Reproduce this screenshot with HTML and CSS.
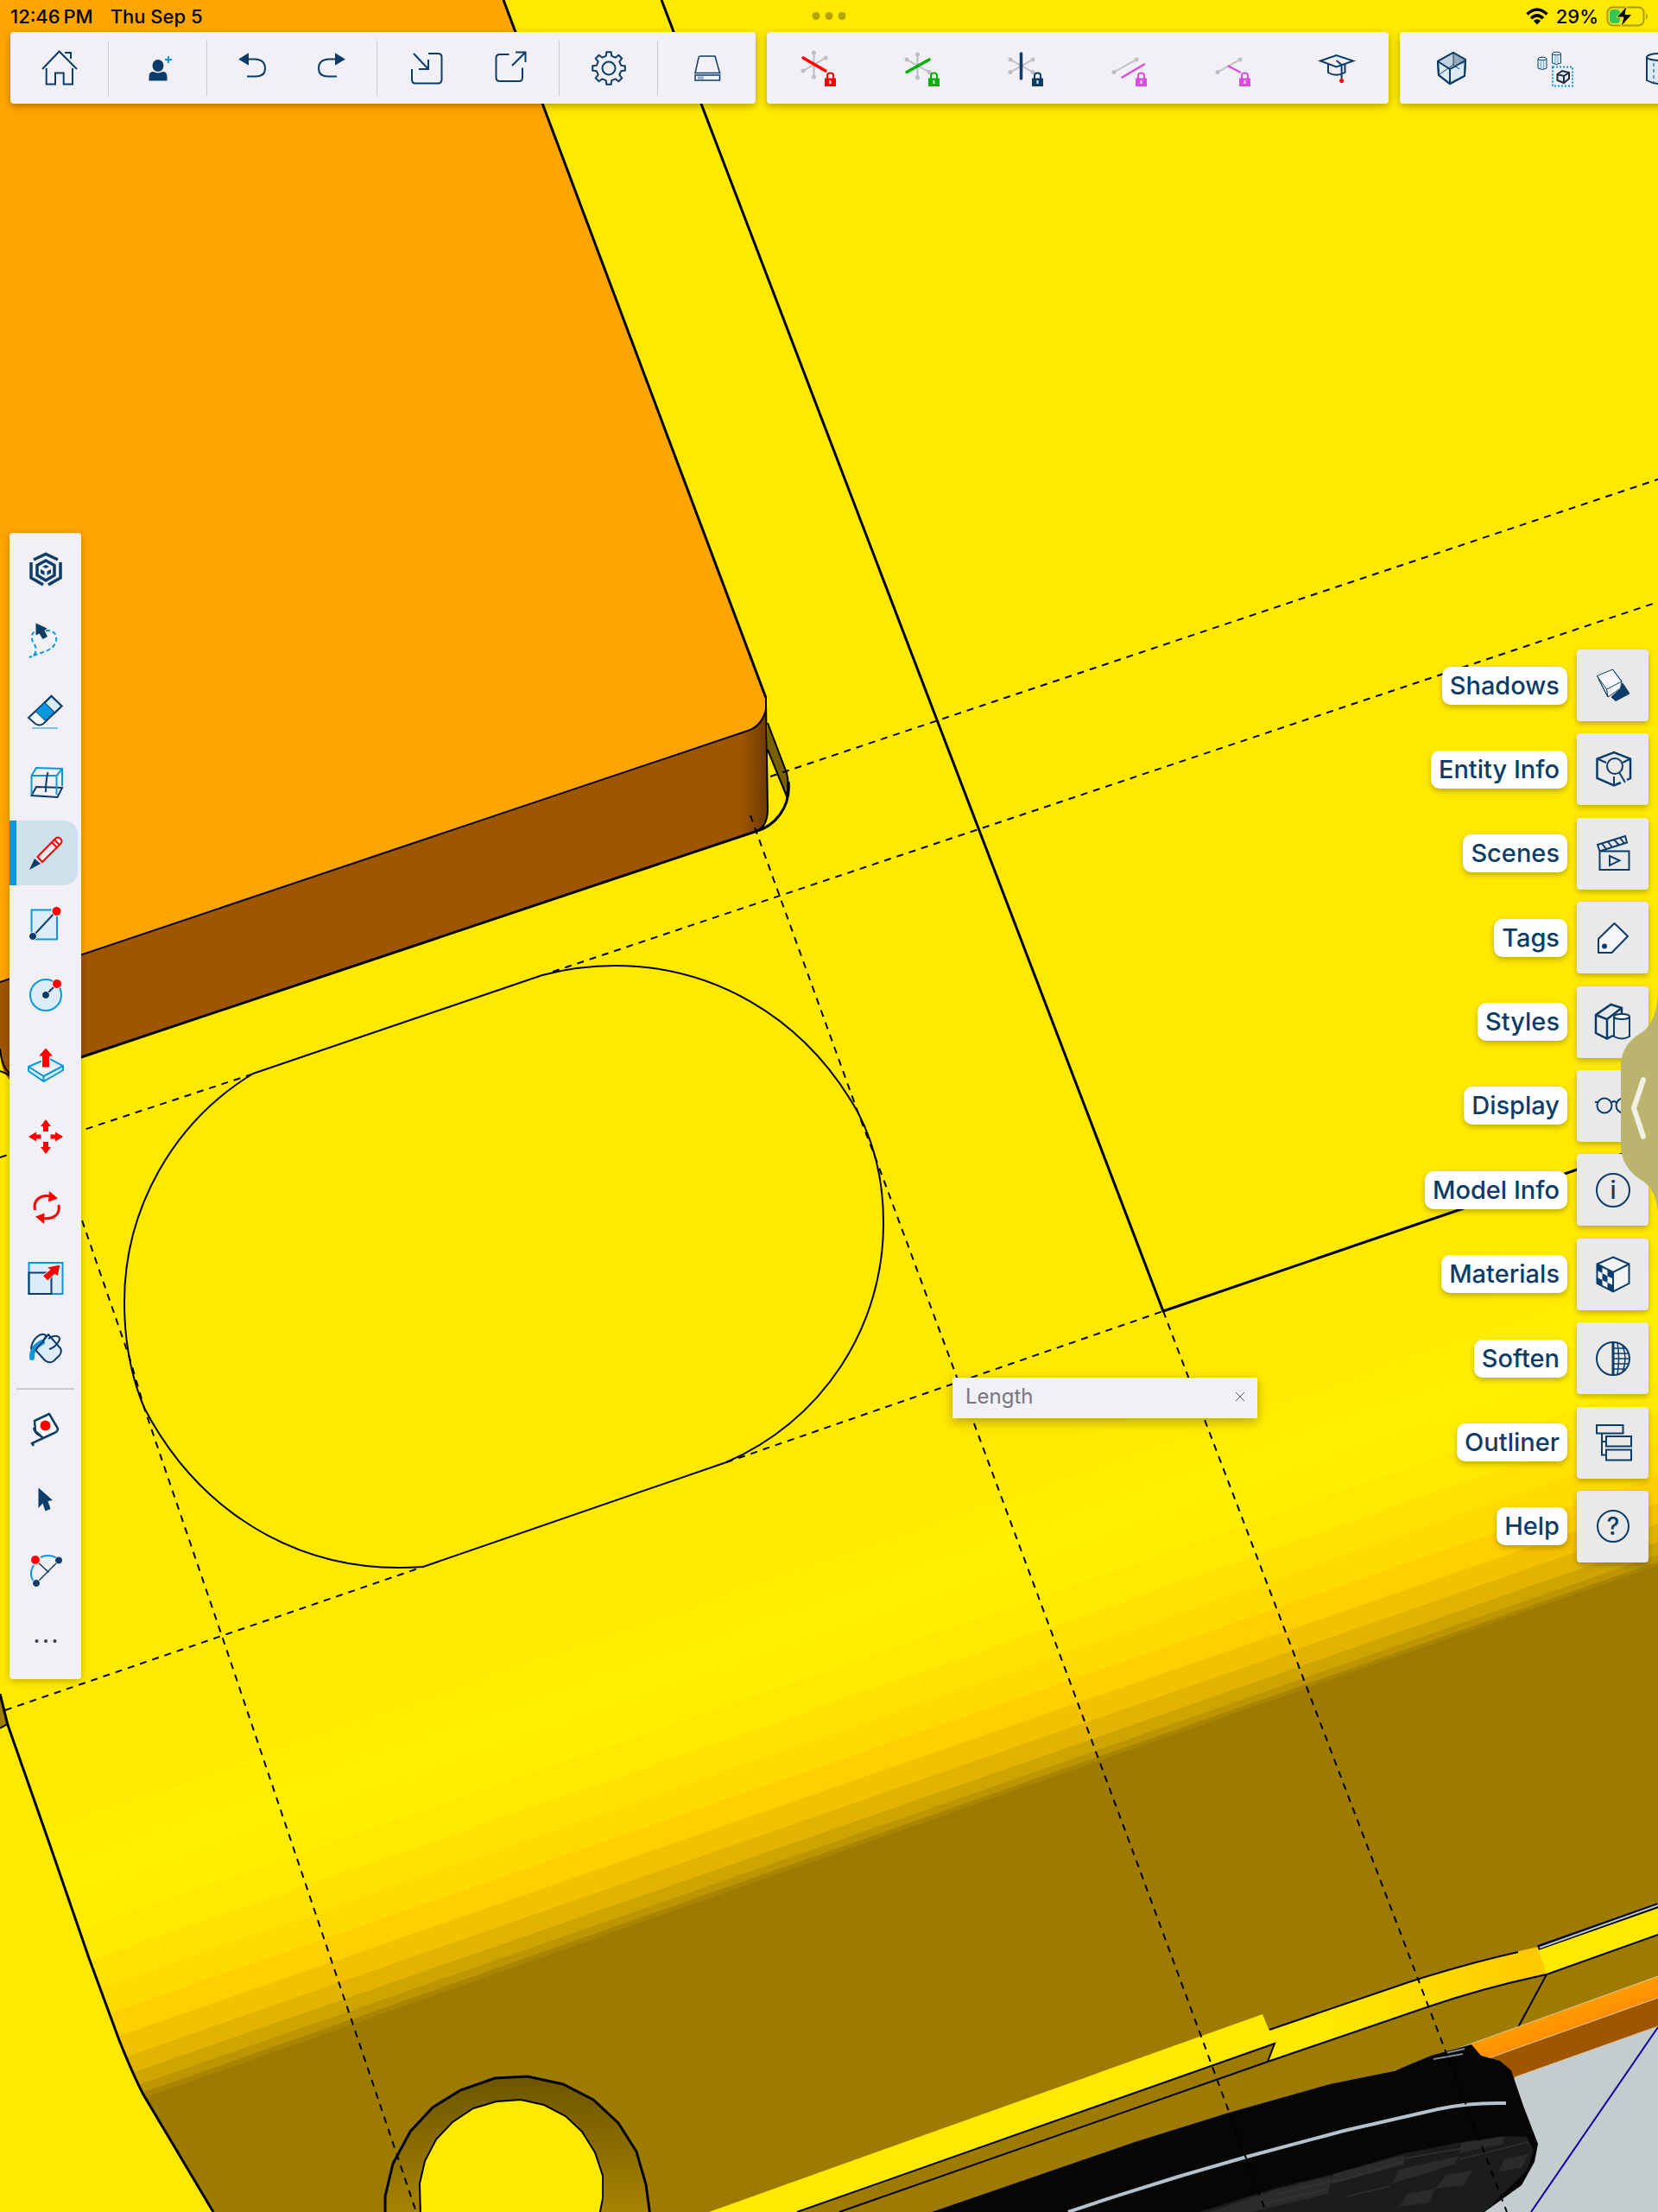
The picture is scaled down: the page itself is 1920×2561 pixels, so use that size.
FILE: index.html
```html
<!DOCTYPE html>
<html lang="en">
<head>
    <meta charset="UTF-8">
    <meta name="viewport" content="width=device-width, initial-scale=1.0">
    <title>3D Modeler</title>
    <link rel="stylesheet" href="styles.css">
</head>
<body>
<div class="app">

    <!-- Model viewport -->
    <svg class="scene" viewBox="0 0 1920 2561" preserveAspectRatio="xMidYMid slice" aria-hidden="true">
        <defs>
            <clipPath id="body-clip">
                <path d="M0 1961L9 1997L55 2128L103 2267L138 2362L166 2425L247 2561H1920V1400H0Z"/>
            </clipPath>
            <linearGradient id="side-shade" gradientUnits="userSpaceOnUse" x1="858" y1="0" x2="889" y2="0">
                <stop offset="0" stop-color="#9f5600"/>
                <stop offset="1" stop-color="#6d3a00"/>
            </linearGradient>
            <linearGradient id="lamp-shade" x1="0" y1="0" x2="0" y2="1">
                <stop offset="0" stop-color="#6d5500"/>
                <stop offset="1" stop-color="#a88400"/>
            </linearGradient>
            <linearGradient id="sill-shade" gradientUnits="userSpaceOnUse" x1="1540" y1="0" x2="1785" y2="0">
                <stop offset="0" stop-color="#ffe900"/>
                <stop offset="1" stop-color="#ffc800"/>
            </linearGradient>
            <linearGradient id="bumper-shade" gradientUnits="userSpaceOnUse" x1="1800" y1="2330" x2="1811" y2="2360">
                <stop offset="0" stop-color="#ff9d00"/>
                <stop offset="1" stop-color="#ff8a00"/>
            </linearGradient>
        </defs>

        <rect width="1920" height="2561" fill="#ffe900"/>

        <!-- rounded body side, one facet per band -->
        <g clip-path="url(#body-clip)">
            <path fill="#ffeb00" d="M0 2098L1200 1682L1920 1430V2561H0Z"/>
            <path fill="#ffee00" d="M0 2138L1200 1726L1920 1474V2561H0Z"/>
            <path fill="#fff000" d="M0 2181L1200 1766L1920 1514V2561H0Z"/>
            <path fill="#ffee00" d="M0 2222L1200 1807L1920 1556V2561H0Z"/>
            <path fill="#ffe900" d="M0 2266L1200 1851L1920 1598V2561H0Z"/>
            <path fill="#ffe200" d="M0 2306L1200 1890L1920 1637V2561H0Z"/>
            <path fill="#ffdb00" d="M0 2342L1200 1926L1920 1673V2561H0Z"/>
            <path fill="#ffcf00" d="M0 2375L1200 1959L1920 1709V2561H0Z"/>
            <path fill="#f4c100" d="M0 2405L1200 1988L1920 1740V2561H0Z"/>
            <path fill="#e2b400" d="M0 2432L1200 2014L1920 1764V2561H0Z"/>
            <path fill="#cda400" d="M0 2453L1200 2036L1920 1785V2561H0Z"/>
            <path fill="#bc9500" d="M0 2470L1200 2051L1920 1800V2561H0Z"/>
            <path fill="#a88400" d="M0 2481L1200 2059L1920 1808V2561H0Z"/>
            <path fill="#9d7b00" d="M0 2488L1200 2064L1920 1812V2561H0Z"/>
        </g>
        <path fill="#a07d00" d="M0 1965L9 1996L0 2001Z"/>
        <path class="edge" d="M0 2001L9 1996"/>
        <path class="edge bold" d="M0 1961L9 1997L55 2128L103 2267L138 2362Q154 2402 166 2425L247 2561"/>

        <!-- head lamp -->
        <path class="edge bold" fill="url(#lamp-shade)" d="M446 2566V2543L455 2505L475 2468L501 2440L533 2420L573 2406L611 2404L652 2413L687 2431L716 2458L737 2491L748 2529L753 2566"/>
        <path class="edge" fill="#ffe900" d="M487 2566L486 2528L492 2502L505 2477L524 2457L548 2441L575 2433L603 2431L630 2437L655 2450L674 2468L689 2492L698 2519V2545L694 2566"/>

        <!-- hood panel -->
        <path fill="#ffa500" d="M0 0H583L887 808V822Q882 842 863 847L0 1137Z"/>
        <path fill="#9f5600" d="M0 1137L863 847Q882 842 887 818L889 937Q889 958 874 963L12 1251Q0 1240 0 1214Z"/>
        <path fill="url(#side-shade)" d="M858 849Q882 842 887 818L889 937Q889 958 874 963L858 968Z"/>
        <path fill="#776000" d="M889 837L911 895L913 910L911 922L889 868Z"/>
        <path class="edge bold" d="M583 0L887 808"/>
        <path class="edge" d="M887 808V822Q882 842 863 847L0 1137"/>
        <path class="edge" d="M887 815L889 937Q889 958 874 963M889 837L911 895Q914 906 911 922L889 868"/>
        <path class="edge bold" d="M913 905C916 935 897 957 874 963L94 1224L12 1251"/>
        <path class="edge" d="M0 1214Q2 1236 12 1243M0 1240L12 1245"/>
        <path class="edge bold" d="M766 0L1347 1518L1920 1322"/>

        <!-- slot outline -->
        <path class="edge" d="M293 1243L628 1129Q670 1118 712 1118C820 1118 928 1172 993 1287C1013 1325 1023 1366 1023 1415A300 300 0 0 1 841 1693L490 1814Q476 1815 462 1815C340 1815 230 1750 167 1630Q144 1575 144 1508A310 310 0 0 1 293 1243Z"/>

        <!-- sill and bumper -->
        <path fill="#ffe900" d="M821 2561L1462 2332L1476 2366L923 2561Z"/>
        <path fill="url(#sill-shade)" d="M1465 2352L1470 2350L1634 2294Q1710 2269 1781 2254L1791 2286Q1720 2303 1655 2323L1468 2387L1476 2366Z"/>
        <path fill="#ffe900" d="M1781 2257L1920 2208V2240L1791 2286Z"/>
        <path class="edge" d="M1470 2350L1634 2294Q1700 2273 1758 2260M972 2561L1468 2387L1655 2323Q1720 2301 1791 2286L1920 2240M923 2561L1476 2366L1468 2387M1791 2286L1758 2347"/>
        <path d="M1781 2255L1920 2206" fill="none" stroke="#000" stroke-width="6"/>
        <path d="M1783 2255L1920 2206" fill="none" stroke="#b9c8d0" stroke-width="2"/>
        <path fill="#c5ccce" d="M1754 2405L1920 2346V2561H1715Z"/>
        <path fill="#9f5600" d="M1715 2384L1920 2311V2346L1754 2405Z"/>
        <path fill="url(#bumper-shade)" d="M1700 2368L1920 2288V2313L1721 2384Z"/>
        <path d="M1614 2398L1704 2366L1920 2288M1721 2384L1920 2313M1754 2405L1920 2346" fill="none" stroke="#dcc9a8" stroke-width="1"/>
        <path d="M1920 2347L1773 2561" stroke="#0b00a8" stroke-width="2"/>

        <!-- tyre -->
        <path fill="#060606" d="M1079 2561L1198 2520L1314 2480L1423 2446L1540 2413L1614 2398L1657 2380L1704 2367L1715 2380L1737 2386L1750 2397L1764 2438L1781 2482L1777 2503L1762 2530L1719 2561Z"/>
        <path fill="#1c1c1c" d="M1388 2561L1478 2533L1544 2517L1626 2493L1692 2480L1742 2473L1768 2474L1776 2490L1768 2513L1719 2561Z"/>
        <path fill="#2b2b2b" d="M1544 2517L1626 2495V2506L1540 2529ZM1692 2481L1742 2474L1740 2482L1690 2493ZM1478 2535L1542 2519L1538 2540L1450 2561H1400ZM1620 2512L1690 2496L1684 2506L1612 2528ZM1675 2518L1705 2513L1695 2530L1662 2534ZM1742 2500L1770 2494L1762 2510L1736 2514ZM1630 2540L1662 2534L1655 2550L1620 2555Z"/>
        <path fill="none" stroke="#3a3a3a" stroke-width="1" d="M1480 2540L1546 2524M1548 2526L1624 2503M1626 2499L1694 2487M1690 2500L1770 2480M1560 2543L1610 2531M1460 2552L1536 2535"/>
        <path fill="none" stroke="#7f8a90" stroke-width="2" d="M1660 2384L1694 2378M1674 2377L1696 2372"/>
        <path fill="none" stroke="#b3c2cc" stroke-width="4" d="M1237 2561Q1340 2526 1444 2497L1556 2467L1665 2442Q1700 2434 1744 2435"/>

        <!-- guides -->
        <g class="guide">
            <path d="M892 899L1920 555"/>
            <path d="M640 1125L1920 697"/>
            <path d="M0 1340L291 1244"/>
            <path d="M6 1980L490 1814"/>
            <path d="M841 1693L1347 1518"/>
            <path d="M95 1413L150 1572L167 1630L259 1900L482 2561"/>
            <path d="M869 944L995 1292L1014 1341L1073 1500L1318 2160L1466 2561"/>
            <path d="M1347 1518L1592 2160L1745 2561"/>
        </g>
    </svg>

    <header class="top">
        <div class="status">
            <span class="status-time">12:46&thinsp;PM</span>
            <span>Thu Sep 5</span>
            <span class="status-dots"><i></i><i></i><i></i></span>
            <span class="status-right">
                <svg class="wifi" viewBox="0 0 26 20">
                    <g fill="none" stroke="#000" stroke-width="3.4">
                        <path d="M1.5 7.5Q13-3.5 24.500 7.500"/>
                        <path d="M6 12.200Q13 5.500 20 12.200"/>
                    </g>
                    <path d="M8.800 15Q13 11.500 17.200 15L13 19.500Z"/>
                </svg>
                29%
                <svg class="battery" viewBox="0 0 50 24">
                    <rect x="1.500" y="1.500" width="42" height="21" rx="6" fill="none" stroke="#a89a00" stroke-width="2"/>
                    <path d="M46 8.500Q50 12 46 15.500Z" fill="#a89a00"/>
                    <rect x="4" y="4" width="12" height="16" rx="4" fill="#34c759"/>
                    <path d="M24 0L12 13H20L17 24L30 9.500H22Z" stroke="#ffe900" stroke-width="1"/>
                </svg>
            </span>
        </div>

        <nav class="toolbars" aria-label="Main toolbars">
            <div class="toolbar">
                <div class="group">
                    <button class="tool" aria-label="Home"><svg class="icon" viewBox="0 0 48 48"><path d="M4 25L23.600 4.500L44 25M30 6H37V13M8.700 24V42.500H19V29.500H28.700V42.500H39V24"/></svg></button>
                </div>
                <div class="group">
                    <button class="tool" aria-label="Invite"><svg class="icon" viewBox="0 0 48 48"><ellipse class="navy" cx="24" cy="21" rx="5.500" ry="6"/><path class="navy" d="M14.500 37.500V34Q14.500 29 18 29Q24 32 30 29Q33.500 29 33.500 34V37.500Z"/><path class="sky-line" d="M36 10V18M32 14H40"/></svg></button>
                </div>
                <div class="group history">
                    <button class="tool" aria-label="Undo"><svg class="icon" viewBox="0 0 48 48"><path d="M18 13.500H26Q38 14 38 24Q38 33.500 27 33.500H17"/><path class="navy" d="M9 13.500L18 8V19Z"/></svg></button>
                    <button class="tool" aria-label="Redo"><svg class="icon" viewBox="0 0 48 48"><path d="M30 13.500H22Q10 14 10 24Q10 33.500 21 33.500H31"/><path class="navy" d="M39 13.500L30 8V19Z"/></svg></button>
                </div>
                <div class="group">
                    <button class="tool" aria-label="Import"><svg class="icon" viewBox="0 0 48 48"><path d="M26 7H37Q41.500 7 41.500 11V37Q41.500 41.500 37 41.500H11Q7 41.500 7 37V25M9 7L26 25M26 14V25H15"/></svg></button>
                    <button class="tool" aria-label="Export"><svg class="icon" viewBox="0 0 48 48"><path d="M22.500 8H12Q7.500 8 7.500 12V35Q7.500 39 12 39H34Q38 39 38 35V23.500M26 21L41.500 5.500M30 5.500H41.500V17"/></svg></button>
                </div>
                <div class="group">
                    <button class="tool" aria-label="Settings"><svg class="icon" viewBox="0 0 48 48"><path d="M21.400 5.200H26.600L27.300 9.900L31.700 11.700L35.400 8.800L39.200 12.600L36.300 16.300L38.100 20.700L42.800 21.400V26.600L38.100 27.300L36.300 31.700L39.200 35.400L35.400 39.200L31.700 36.300L27.300 38.100L26.600 42.800H21.400L20.700 38.100L16.300 36.300L12.600 39.200L8.800 35.400L11.700 31.700L9.900 27.300L5.200 26.600V21.400L9.900 20.700L11.700 16.300L8.800 12.600L12.600 8.800L16.300 11.700L20.700 9.900Z"/><circle cx="24" cy="24" r="7.500"/></svg></button>
                </div>
                <div class="group">
                    <button class="tool" aria-label="Drive"><svg class="icon" viewBox="0 0 48 48"><g stroke-width="1.500"><path d="M16 10H33L38.500 29.500H10L14 12Q14.500 10 16 10ZM10 32H38.500V38H10Z"/></g><path d="M13 35H20" stroke="#8fa5ba" stroke-width="3"/></svg></button>
                </div>
            </div>

            <div class="toolbar locks">
                <button class="tool" aria-label="Lock red axis"><svg class="icon" viewBox="0 0 48 48"><g class="axis"><path d="M18.500 6V34M32 12L6 27"/><circle cx="18.500" cy="6" r="1.500"/><circle cx="18.500" cy="34" r="1.500"/><circle cx="32" cy="12" r="1.500"/><circle cx="6" cy="27" r="1.500"/></g><g class="lock red"><path d="M6 12L32 27" stroke-width="3.500"/><path class="shackle" d="M34 36V32Q34 29.500 37.500 29.500Q41 29.500 41 32V36"/><path class="case" d="M31 35.500H44V45H31ZM36.500 38V42H38.500V38Z"/></g></svg></button>
                <button class="tool" aria-label="Lock green axis"><svg class="icon" viewBox="0 0 48 48"><g class="axis"><path d="M18.500 8V35M6 14L32 28.500"/><circle cx="18.500" cy="8" r="1.500"/><circle cx="18.500" cy="35" r="1.500"/><circle cx="6" cy="14" r="1.500"/><circle cx="32" cy="28.500" r="1.500"/></g><g class="lock green"><path d="M32 14L6 28.500" stroke-width="3.500"/><path class="shackle" d="M34 36V32Q34 29.500 37.500 29.500Q41 29.500 41 32V36"/><path class="case" d="M31 35.500H44V45H31ZM36.500 38V42H38.500V38Z"/></g></svg></button>
                <button class="tool" aria-label="Lock blue axis"><svg class="icon" viewBox="0 0 48 48"><g class="axis"><path d="M6 14L32 28.500M32 14L6 28.500"/><circle cx="6" cy="14" r="1.500"/><circle cx="32" cy="28.500" r="1.500"/><circle cx="32" cy="14" r="1.500"/><circle cx="6" cy="28.500" r="1.500"/></g><g class="lock blue"><path d="M18.500 7V36" stroke-width="3.500"/><path class="shackle" d="M34 36V32Q34 29.500 37.500 29.500Q41 29.500 41 32V36"/><path class="case" d="M31 35.500H44V45H31ZM36.500 38V42H38.500V38Z"/></g></svg></button>
                <button class="tool" aria-label="Lock parallel"><svg class="icon" viewBox="0 0 48 48"><g class="axis"><path d="M6 28.500L32 14"/><circle cx="6" cy="28.500" r="1.500"/><circle cx="32" cy="14" r="1.500"/></g><g class="lock magenta"><path d="M15.500 34.500L41 19.500" stroke-width="2.500"/><path class="shackle" d="M34 36V32Q34 29.500 37.500 29.500Q41 29.500 41 32V36"/><path class="case" d="M31 35.500H44V45H31ZM36.500 38V42H38.500V38Z"/></g></svg></button>
                <button class="tool" aria-label="Lock perpendicular"><svg class="icon" viewBox="0 0 48 48"><g class="axis"><path d="M6 28.500L32 14"/><circle cx="6" cy="28.500" r="1.500"/><circle cx="32" cy="14" r="1.500"/></g><g class="lock magenta"><path d="M18.500 21.500L32 28.500" stroke-width="2.500"/><path class="shackle" d="M34 36V32Q34 29.500 37.500 29.500Q41 29.500 41 32V36"/><path class="case" d="M31 35.500H44V45H31ZM36.500 38V42H38.500V38Z"/></g></svg></button>
                <button class="tool" aria-label="Learn"><svg class="icon" viewBox="0 0 48 48"><path d="M5 15.500L23.600 9L43 15.500L23.600 22.500ZM14 19.500V29Q23.600 34.500 33.500 29V19.500M23.600 15L29.600 20V36"/><circle class="red-fill" cx="29.600" cy="38.500" r="2.500"/></svg></button>
            </div>

            <div class="toolbar views">
                <button class="tool" aria-label="Shaded view"><svg class="icon" viewBox="0 0 48 48"><path d="M26 6L40 14L39 33L22 42L9 32L8 16Z" fill="#dceaf4"/><path d="M26 6L8 16L22 24L26 20Z" fill="#c3d4e0" stroke="none"/><path d="M26 6L40 14L38 19L26 20Z" fill="#93a9b8" stroke="none"/><path d="M26 6L40 14L39 33L22 42L9 32L8 16ZM8 16L22 25L40 15M22 25V42"/><path d="M26 6V20L10 31M26 20L33 25" stroke-width="1"/></svg></button>
                <button class="tool" aria-label="Components"><svg class="icon thin" viewBox="0 0 48 48"><path fill="#dceaf4" d="M4 13V24Q9 27 14 24V13M20.500 7V18Q25.500 21 30.500 18V7"/><ellipse fill="#dceaf4" cx="9" cy="13" rx="5" ry="1.800"/><ellipse fill="#dceaf4" cx="25.500" cy="7" rx="5" ry="1.800"/><path d="M7.500 16V24M10.500 16V24M24 10V18M27 10V18" stroke="#7aa9cc"/><rect x="21" y="22.500" width="23" height="22" stroke="#0a98dc" stroke-width="2" stroke-dasharray="2 2"/><path fill="#dceaf4" stroke="#222a3a" stroke-width="2" d="M26.500 31L32 27L40 29V36L34 41L26.500 38ZM26.500 31L34 33L40 29M34 33V41"/></svg></button>
                <button class="tool" aria-label="Solids"><svg class="icon" viewBox="0 0 48 48"><path fill="#dceaf4" d="M10 11V38Q24 46 38 38V11"/><ellipse fill="#f0f6fa" cx="24" cy="11" rx="14" ry="4"/><path d="M18 18V40" stroke-width="1" stroke-dasharray="4 3"/></svg></button>
            </div>
        </nav>
    </header>

    <main class="sides">
        <div class="palette" role="toolbar" aria-label="Drawing tools">
            <button class="tool" aria-label="Modeler"><svg class="icon" viewBox="0 0 48 48"><g stroke-width="3.500"><path d="M10 12L24 5.500L38 12M41 15V33L27 41M7 15V33L21 41"/><path d="M24 13L34 18.500V30L24 36L14 30V18.500Z"/></g><path class="navy" d="M24 18L28 20L24 22L20 20ZM18 23L22.500 25.500V30L18 27.500ZM30 23L25.500 25.500V30L30 27.500Z" stroke="none"/></svg></button>
            <button class="tool" aria-label="Lasso"><svg class="icon" viewBox="0 0 48 48"><path class="sky-line" stroke-dasharray="5 3" d="M24 12C38 11 39 24 32 31C26 37 15 38 5 43C13 41 14 34 11 28C6 22 7 14 13 12"/><path class="navy" stroke="none" d="M12.500 3.500L25.500 9.500L22.500 12L26 19L20.500 22L16.500 15.500L12.500 17.500Z"/></svg></button>
            <button class="tool" aria-label="Eraser"><svg class="icon" viewBox="0 0 48 48"><path fill="#f4faff" d="M4 31L30.500 6L42.500 17.500L21 38Q17 41 12 38Z"/><path fill="#d8ebf8" d="M22.500 14L30.500 6L42.500 17.500L34 25.500Z"/><path fill="#0a98dc" stroke-width="1" d="M12 23.500L22.500 13.500L34 24.500L23.500 34.500Z"/><path class="sky-line" stroke-width="1" d="M8 43H38"/></svg></button>
            <button class="tool" aria-label="Section"><svg class="icon" viewBox="0 0 48 48"><path d="M13 29L43 30L37.500 41L7.500 39Z"/><path class="sky-line" d="M7.500 38V16L13 7L43 8V28M43 8L36.500 16V38M36.500 16H7.500"/><path d="M26.500 12Q24 22 24 35"/></svg></button>
            <button class="tool selected" aria-label="Line" aria-pressed="true"><svg class="icon" viewBox="0 0 48 48"><path class="red-line" fill="#e6eef5" d="M14.500 28L35 7Q38 4 41 7Q44 10 41 13L20 34ZM31 11L36.500 17M34 8L39.500 14"/><path class="navy" stroke="none" d="M5 43L11 30L18 36Z"/></svg></button>
            <button class="tool" aria-label="Rectangle"><svg class="icon" viewBox="0 0 48 48"><rect class="sky-shape" x="7.500" y="7.500" width="29.500" height="34"/><path d="M9 38L36 9"/><circle class="navy halo" cx="9" cy="38" r="4.500"/><circle class="red-fill halo" cx="36.500" cy="9" r="5.500"/></svg></button>
            <button class="tool" aria-label="Circle"><svg class="icon" viewBox="0 0 48 48"><circle class="sky-shape" cx="24" cy="24" r="18"/><path d="M24 24L37 11"/><circle class="navy halo" cx="24" cy="24" r="4.500"/><circle class="red-fill halo" cx="37" cy="11" r="5.500"/></svg></button>
            <button class="tool" aria-label="Push/Pull"><svg class="icon" viewBox="0 0 48 48"><path class="sky-shape" d="M4 25L27 15L44 24V29L21.500 42L4 30ZM4 25L21.500 36L44 24M21.500 36V42"/><path class="red-fill halo" d="M24 3L33 13H28.500V26H19.500V13H15Z"/></svg></button>
            <button class="tool" aria-label="Move"><svg class="icon" viewBox="0 0 48 48"><path class="red-fill" d="M24 4L30 12H27V18H21V12H18ZM24 44L30 36H27V30H21V36H18ZM4 24L13 18.500V21.500H18.500V26.500H13V29.500ZM44 24L35 18.500V21.500H29.500V26.500H35V29.500Z"/></svg></button>
            <button class="tool" aria-label="Rotate"><svg class="icon" viewBox="0 0 48 48"><path class="red-line" stroke-width="3" d="M11.500 27C9 15 18 9 29 11M39 21C41 33 32 38 21 36.500"/><path class="red-fill" d="M28 5L38 13.500L27 17.500ZM22.500 30.500L12 34.500L22 43Z"/></svg></button>
            <button class="tool" aria-label="Scale"><svg class="icon" viewBox="0 0 48 48"><rect class="sky-shape" x="4.500" y="6" width="39" height="36"/><rect x="4.500" y="17.500" width="26" height="24.500"/><path class="red-fill halo" d="M41 8L38 22L34.500 19L26 27L20.500 21L29 14L25 11Z"/></svg></button>
            <button class="tool" aria-label="Paint"><svg class="icon" viewBox="0 0 48 48"><path fill="#dcecf8" d="M13 23L27 7L41 23Q43 27 40 31L33 38Q28 41 23 37L13 26Z"/><path stroke="#0a98dc" stroke-width="6" stroke-linecap="round" d="M8 34C8 24 12 20 20 16"/><path d="M7 24C8 12 18 4 24 8C24 15 15 19 12 26M27 12C34 7 43 8 39 15Q35 22 28 24"/></svg></button>
            <hr class="divider">
            <button class="tool" aria-label="Tape measure"><svg class="icon" viewBox="0 0 48 48"><path fill="#fff" d="M11 15L28 7L38 24Q38 27 35 28.500L21 35L12 27Z" stroke-width="2.500" stroke-linejoin="round"/><circle class="red-fill" cx="23.500" cy="20.500" r="6"/><path d="M10 23Q12 31 18 32M21 35L8 41L10 44" stroke-width="2.500"/></svg></button>
            <button class="tool" aria-label="Select"><svg class="icon" viewBox="0 0 48 48"><path class="navy" stroke="none" d="M15.500 10.500L32 25L26.500 26L29.500 35L23.500 37.500L20.500 28.500L15.500 34Z"/></svg></button>
            <button class="tool" aria-label="Arc"><svg class="icon" viewBox="0 0 48 48"><path class="sky-line" d="M18 9Q27 5 36 9.500M10 18Q4 28 9.500 36"/><path stroke-width="1.500" d="M14 14L27.500 26.500M39 13L13 39"/><circle class="red-fill halo" cx="12" cy="12" r="5.500"/><circle class="navy halo" cx="39" cy="12.500" r="4.500"/><circle class="navy halo" cx="13" cy="39" r="4.500"/></svg></button>
            <button class="tool" aria-label="More tools"><svg class="icon" viewBox="0 0 48 48"><g fill="#3a3a4a" stroke="none"><circle cx="13.500" cy="24" r="2"/><circle cx="24" cy="24" r="2"/><circle cx="34.500" cy="24" r="2"/></g></svg></button>
        </div>

        <div class="panels">
            <button class="panel"><span class="label">Shadows</span><span class="tile"><svg class="icon thin" viewBox="0 0 48 48"><path class="navy" d="M22 37L27 41.500L43 33L35 21L32 28Z"/><path fill="#f4f6f9" d="M5.500 12.500L23.500 5L34 19L32.500 27L18 37Z"/><path d="M5.500 12.500L16.500 28L34 19M16.500 28L18 37M23.500 5L34 19M7.500 17L18 37"/></svg></span></button>
            <button class="panel"><span class="label">Entity Info</span><span class="tile"><svg class="icon" viewBox="0 0 48 48"><path stroke-width="2.500" d="M33 39L25 42.500L5.500 34V11.500L25 4L44 11.500V34L40 36"/><circle cx="26" cy="20" r="9"/><path d="M31.500 28L38 39M25 32V42M7 12L16 16M43 12L35 16"/></svg></span></button>
            <button class="panel"><span class="label">Scenes</span><span class="tile"><svg class="icon" viewBox="0 0 48 48"><path d="M8.500 21.500H42.500V43H8.500ZM6 14L38 4L40 11.500L8.500 21.500ZM20 27V38L31.500 32.300ZM11 12.500L16 19M18 10.500L23 17M25 8L31 14.500M32 6L37 12.500"/></svg></span></button>
            <button class="panel"><span class="label">Tags</span><span class="tile"><svg class="icon" viewBox="0 0 48 48"><path fill="#f4f6f9" stroke-linejoin="round" d="M7 25L25.500 7L41 22L22.500 41H7Z"/><circle class="navy" cx="14" cy="33.500" r="2"/></svg></span></button>
            <button class="panel"><span class="label">Styles</span><span class="tile"><svg class="icon" viewBox="0 0 48 48"><path stroke-width="2.500" d="M24 40L17 43.500L4 37V16L21.500 4L34 8V16M4 16L17 21V43.500M17 21L34 8"/><path fill="#e9e9ea" d="M25 18V41Q34 46 43 41V18"/><ellipse fill="#fff" cx="34" cy="18" rx="9" ry="3"/></svg></span></button>
            <button class="panel"><span class="label">Display</span><span class="tile"><svg class="icon" viewBox="0 0 48 48"><circle cx="14" cy="24" r="8.500"/><circle cx="36" cy="24" r="8.500"/><path d="M22 21Q25 17 28 21M3 20H7"/></svg></span></button>
            <button class="panel"><span class="label">Model Info</span><span class="tile"><svg class="icon" viewBox="0 0 48 48"><circle cx="24" cy="24" r="19"/><text x="24" y="34">i</text></svg></span></button>
            <button class="panel"><span class="label">Materials</span><span class="tile"><svg class="icon" viewBox="0 0 48 48"><path fill="#f3f4f6" d="M24 4.500L42.500 12.500V35L24 44.500L5.500 35V12.500Z"/><path d="M5.500 12.500L24 22L42.500 12.500M24 22V44.500"/><path class="navy" stroke="none" d="M5.500 12.500L11.500 15.500V23L5.500 20ZM17.500 19L24 22V29.500L17.500 26.500ZM11.500 23L17.500 26.500V34L11.500 31ZM5.500 28L11.500 31V38L5.500 35ZM17.500 34L24 37V44.500L17.500 41.500Z"/></svg></span></button>
            <button class="panel"><span class="label">Soften</span><span class="tile"><svg class="icon" viewBox="0 0 48 48"><circle cx="24" cy="24" r="19"/><path stroke-width="1.500" d="M29 5.500Q32 24 29 42.500M35 9Q41 24 35 39M24 12H38.500M24 18H42M24 24H43M24 30H42M24 36H38.500"/><path stroke-width="3" d="M24 5V43"/></svg></span></button>
            <button class="panel"><span class="label">Outliner</span><span class="tile"><svg class="icon" viewBox="0 0 48 48"><path d="M5 4H35.500V13.500H5ZM16 17H45V28.500H16ZM16 32.500H45V44.500H16ZM11 13.500V38.500H16M11 23H16"/></svg></span></button>
            <button class="panel"><span class="label">Help</span><span class="tile"><svg class="icon" viewBox="0 0 48 48"><circle cx="24" cy="24" r="18"/><text x="24" y="34">?</text></svg></span></button>
        </div>
    </main>

    <form class="measure">
        <input type="text" placeholder="Length" aria-label="Length">
        <button type="reset" aria-label="Clear"><svg viewBox="0 0 12 12"><path d="M1 1L11 11M11 1L1 11"/></svg></button>
    </form>

    <button class="drawer" aria-label="Show side window">
        <svg viewBox="0 0 43 258"><path fill="#bab46f" d="M43 0Q41 30 26 42C10 52 0 62 0 85V173C0 193 10 206 26 216Q41 226 43 252Z"/><path fill="none" stroke="#f2f1e4" stroke-width="6" stroke-linecap="round" stroke-linejoin="round" d="M26 98L15 131L26 164"/></svg>
    </button>
</div>
</body>
</html>
```
FILE: styles.css
```css
* {
    box-sizing: border-box;
}
body {
    margin: 0;
    font-family: Inter, "Liberation Sans", sans-serif;
    color: #0c3c69;
}
button {
    border: none;
    background: none;
    padding: 0;
    margin: 0;
    font: inherit;
    color: inherit;
    cursor: pointer;
}
.app {
    position: relative;
    display: grid;
    min-height: 100vh;
    overflow: hidden;
    background: #ffe900;
}

/* viewport drawing */
.scene {
    position: absolute;
    inset: 0;
    width: 100%;
    height: 100%;
}
.edge {
    stroke: #000;
    stroke-width: 2;
}
.edge:not([fill]) {
    fill: none;
}
.bold {
    stroke-width: 3;
}
.guide path {
    fill: none;
    stroke: #000;
    stroke-width: 2;
    stroke-dasharray: 8 7;
}

/* status bar and toolbars */
.top {
    grid-area: 1 / 1;
    align-self: start;
    position: relative;
    min-width: 0;
}
.status {
    display: flex;
    align-items: center;
    gap: 20px;
    height: 37px;
    padding: 0 10px 0 12px;
    color: #000;
    font-size: 22px;
    font-weight: 500;
    white-space: nowrap;
}
.status-dots {
    position: absolute;
    left: 50%;
    top: 14px;
    transform: translateX(-50%);
    display: flex;
    gap: 6px;
}
.status-dots i {
    width: 9px;
    height: 9px;
    border-radius: 50%;
    background: #b3a300;
}
.status-right {
    display: flex;
    align-items: center;
    gap: 9px;
    margin-left: auto;
}
.wifi {
    width: 26px;
    height: 20px;
}
.battery {
    width: 50px;
    height: 24px;
}
.toolbars {
    display: flex;
    gap: 13px;
    padding-left: 12px;
}
.toolbar {
    display: flex;
    flex: none;
    align-items: center;
    height: 83px;
    background: #f1f0f6;
    border-radius: 4px;
    box-shadow: 0 3px 8px rgba(0, 0, 0, 0.3);
}
.group {
    display: flex;
    padding: 0 8px;
    height: 64px;
}
.group + .group {
    border-left: 1px solid #c9c9ce;
}
.tool {
    display: flex;
    align-items: center;
    justify-content: center;
    width: 97px;
}
.history .tool {
    width: 90px;
}
.locks .tool,
.views .tool {
    width: 120px;
}

/* icons */
.icon {
    width: 48px;
    height: 48px;
    fill: none;
    stroke: #0c3c69;
    stroke-width: 2;
}
.thin {
    stroke-width: 1;
}
.navy {
    fill: #0c3c69;
}
.red-fill {
    fill: #f00;
    stroke: none;
}
.red-line {
    stroke: #f00;
}
.sky-line {
    stroke: #0a98dc;
}
.sky-shape {
    fill: #dcecf8;
    stroke: #0a98dc;
}
.halo {
    stroke: #fff;
    stroke-width: 1;
}
.axis {
    stroke: #bcbcc2;
}
.lock {
    stroke: currentColor;
    stroke-linecap: round;
}
.shackle {
    stroke-width: 2;
}
.case {
    fill: currentColor;
    fill-rule: evenodd;
    stroke: none;
}
.red {
    color: #f00;
}
.green {
    color: #00b200;
}
.blue {
    color: #0c3c69;
}
.magenta {
    color: #dd4be0;
}
.icon text {
    fill: #0c3c69;
    stroke: none;
    font-size: 28px;
    font-weight: 500;
    text-anchor: middle;
}

/* left and right columns */
.sides {
    grid-area: 1 / 1;
    position: relative;
    display: flex;
    align-items: center;
    justify-content: space-between;
    padding: 0 11px;
    pointer-events: none;
}
.palette,
.panels {
    display: flex;
    flex-direction: column;
    pointer-events: auto;
}
.palette {
    width: 83px;
    padding: 2px 0 3px;
    background: #f1f0f6;
    border-radius: 4px;
    box-shadow: 0 2px 8px rgba(0, 0, 0, 0.25);
}
.palette .tool {
    width: 83px;
    height: 82px;
}
.palette .selected {
    width: 79px;
    height: 75px;
    margin: 3px 0 4px;
    padding-right: 4px;
    border-left: 8px solid #0a98dc;
    border-radius: 0 16px 16px 0;
    background: #cfe0eb;
}
.divider {
    width: 67px;
    margin: 4px auto;
    border: none;
    border-top: 2px solid #c9c9ce;
}
.panels {
    justify-content: space-between;
    align-items: flex-end;
    height: 1057px;
}
.panel {
    display: flex;
    align-items: center;
    gap: 11px;
}
.label {
    padding: 0 9px;
    border-radius: 10px;
    background: #fff;
    font-size: 29px;
    font-weight: 500;
    line-height: 44px;
    box-shadow: 0 3px 6px rgba(0, 0, 0, 0.25);
}
.tile {
    display: flex;
    align-items: center;
    justify-content: center;
    width: 83px;
    height: 83px;
    border-radius: 4px;
    background: #e9e9ea;
    box-shadow: 0 3px 6px rgba(0, 0, 0, 0.25);
}

/* floating measurement box */
.measure {
    position: absolute;
    left: 1103px;
    top: 1595px;
    display: flex;
    align-items: center;
    width: 353px;
    height: 47px;
    padding: 0 14px 4px 15px;
    background: #f1f0f6;
    box-shadow: 0 4px 12px rgba(0, 0, 0, 0.3);
}
.measure input {
    flex: 1;
    min-width: 0;
    height: 42px;
    padding: 0;
    border: none;
    outline: none;
    background: none;
    font: 400 24px Inter, sans-serif;
    color: #3a3a4a;
}
.measure input::placeholder {
    color: #757581;
    opacity: 1;
}
.measure button {
    display: flex;
}
.measure svg {
    width: 12px;
    height: 12px;
    stroke: #5c5c68;
    stroke-width: 1;
}

/* system slide-over handle */
.drawer {
    position: absolute;
    right: 0;
    top: 50%;
    transform: translateY(-50%);
    display: flex;
}
.drawer svg {
    width: 43px;
    height: 258px;
}
```
